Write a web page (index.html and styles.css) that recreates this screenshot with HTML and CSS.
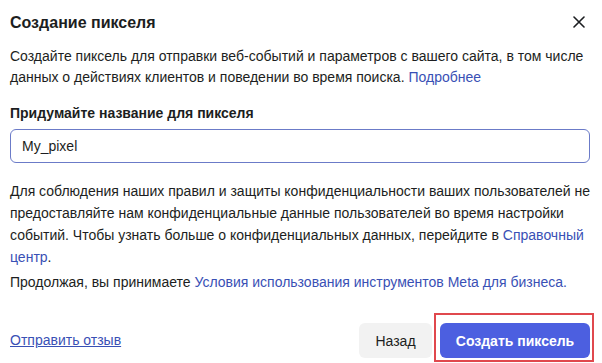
FILE: index.html
```html
<!DOCTYPE html>
<html lang="ru">
<head>
  <meta charset="UTF-8">
  <title>Создание пикселя</title>
  <link rel="stylesheet" href="styles.css">
</head>
<body>
  <div class="dialog">
    <div class="dialog-header">
      <h2>Создание пикселя</h2>
      <button class="close-btn" aria-label="Закрыть">
        <svg width="12" height="12" viewBox="0 0 12 12"><path d="M1 1L11 11M11 1L1 11" stroke="#1c1e21" stroke-width="1.6" stroke-linecap="round"/></svg>
      </button>
    </div>

    <p class="intro">Создайте пиксель для отправки веб-событий и параметров с вашего сайта, в том числе данных о действиях клиентов и поведении во время поиска. <a href="#">Подробнее</a></p>

    <label class="field-label" for="pixelName">Придумайте название для пикселя</label>
    <input type="text" id="pixelName" class="field-input" value="My_pixel">

    <p class="notice">Для соблюдения наших правил и защиты конфиденциальности ваших пользователей не предоставляйте нам конфиденциальные данные пользователей во время настройки событий. Чтобы узнать больше о конфиденциальных данных, перейдите в <a href="#">Справочный центр</a>.</p>

    <p class="terms">Продолжая, вы принимаете <a href="#">Условия использования инструментов Meta для бизнеса.</a></p>

    <div class="dialog-footer">
      <a href="#" class="feedback">Отправить отзыв</a>
      <div class="actions">
        <button class="btn btn-back">Назад</button>
        <div class="highlight">
          <button class="btn btn-primary">Создать пиксель</button>
        </div>
      </div>
    </div>
  </div>
</body>
</html>
```

FILE: styles.css
```css
body {
  margin: 0;
  background: #ffffff;
  font-family: "Liberation Sans", Arial, sans-serif;
  color: #1c1e21;
}

.dialog {
  width: 602px;
  height: 363px;
  box-sizing: border-box;
  padding: 0 12px 0 10px;
  display: flex;
  flex-direction: column;
}

.dialog-header {
  display: flex;
  justify-content: space-between;
  align-items: center;
  height: 44px;
}

h2 {
  margin: 0;
  padding-top: 1px;
  font-size: 16px;
  font-weight: bold;
  color: #1c1e21;
}

.close-btn {
  background: none;
  border: none;
  padding: 0;
  margin-right: 3px;
  width: 16px;
  height: 16px;
  display: flex;
  align-items: center;
  justify-content: center;
  cursor: pointer;
}

p {
  margin: 0;
  font-size: 14px;
  line-height: 21px;
}

a {
  color: #3950b5;
  text-decoration: none;
}

.intro {
  margin-top: 2px;
}

.field-label {
  display: block;
  margin-top: 15px;
  font-size: 14px;
  font-weight: bold;
  line-height: 20px;
}

.field-input {
  display: block;
  margin-top: 6px;
  width: 100%;
  height: 34px;
  box-sizing: border-box;
  padding: 0 11px;
  border: 1px solid #6b7bc8;
  border-radius: 6px;
  font-family: inherit;
  font-size: 14px;
  color: #1c1e21;
  outline: none;
}

.notice {
  margin-top: 17px;
  line-height: 22px;
}

.terms {
  margin-top: 4px;
}

.dialog-footer {
  margin-top: auto;
  margin-right: -4px;
  display: flex;
  justify-content: space-between;
  align-items: flex-end;
  padding-bottom: 1px;
}

.feedback {
  font-size: 14px;
  line-height: 35px;
  margin-bottom: 4px;
  text-decoration: underline;
}

.actions {
  display: flex;
  align-items: flex-end;
  gap: 2px;
}

.btn {
  height: 35px;
  border: none;
  border-radius: 6px;
  font-family: inherit;
  font-size: 14px;
  cursor: pointer;
}

.btn-back {
  width: 73px;
  margin-bottom: 4px;
  background: #f2f2f2;
  color: #1c1e21;
}

.highlight {
  border: 2px solid #e0484d;
  padding: 8px 2px 2px 4px;
}

.btn-primary {
  display: block;
  width: 150px;
  background: #4c5fe0;
  color: #ffffff;
  font-weight: bold;
}
```
